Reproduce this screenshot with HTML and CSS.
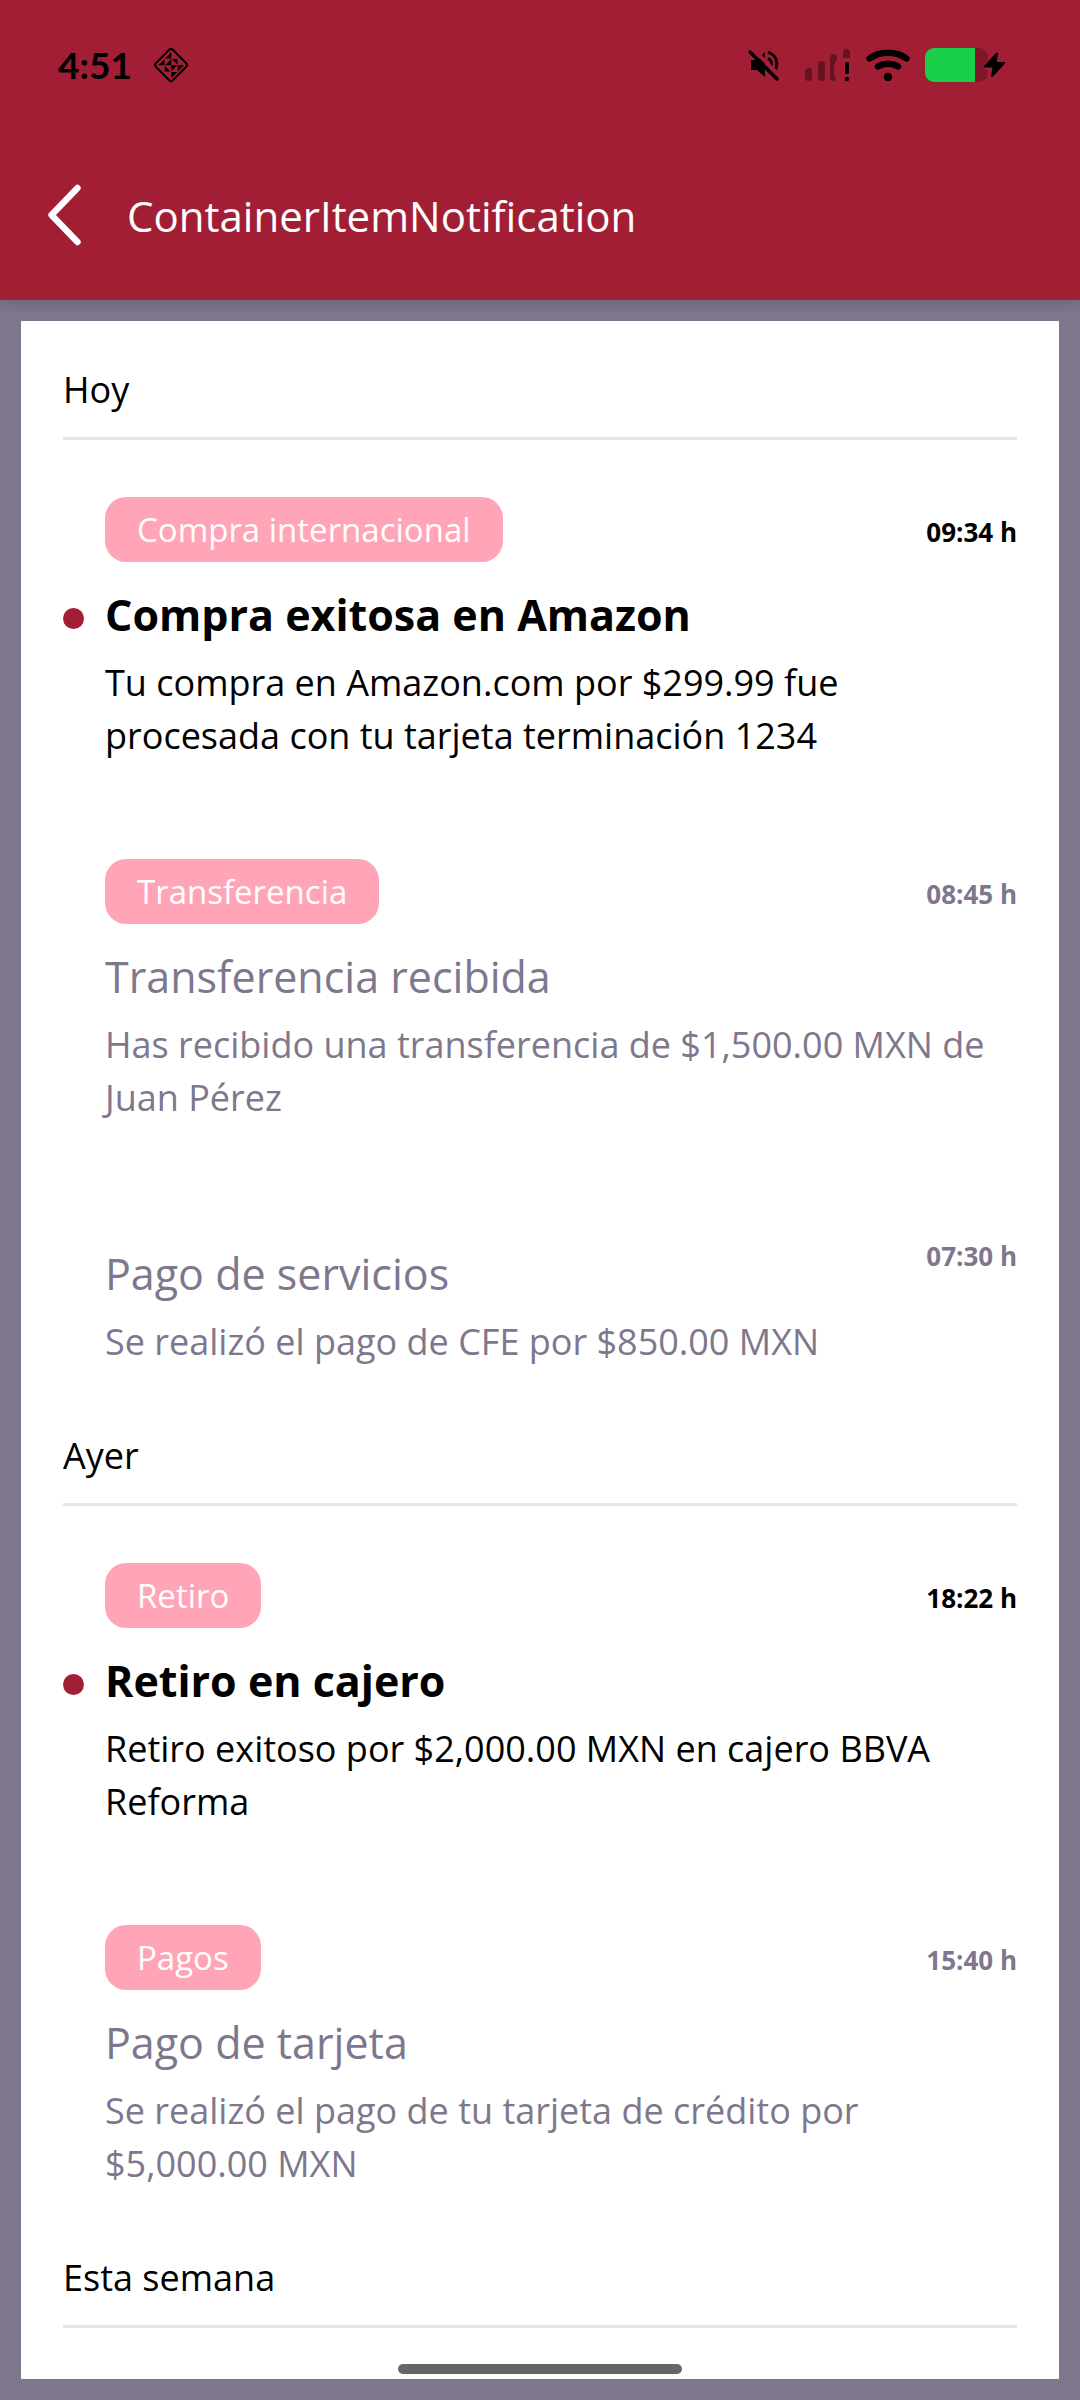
FILE: index.html
```html
<!DOCTYPE html>
<html lang="es">
<head>
<meta charset="utf-8">
<meta name="viewport" content="width=device-width, initial-scale=1">
<title>ContainerItemNotification</title>
<link rel="stylesheet" href="styles.css">
</head>
<body>
<header class="app-header">
  <div class="status-bar">
    <div class="status-left">
      <span class="clock">4:51</span>
      <svg width="38" height="38" viewBox="0 0 38 38" aria-hidden="true">
        <rect x="7" y="7" width="24" height="24" rx="2.5" transform="rotate(45 19 19)" fill="none" stroke="#000" stroke-width="2"/>
        <path d="M19.300 6v6.500h-6zM12.500 13v6.300H6.300zM19.300 13v6.300h-6.300zM20 13h5.500v5.500zM25.800 19.300H32l-6.200 6.200zM19.300 19.300h6l-6 6zM12.800 20v5.500h5.500zM19.300 32v-6h6z" fill="#000"/>
        <path d="M14.500 17.800v-3.300h3.300z" fill="#a21e35"/>
      </svg>
    </div>
    <div class="status-right">
      <svg class="mute" width="32" height="34" viewBox="0 0 32 34" aria-hidden="true">
        <path d="M3 12h6l8-8v25l-8-7H3z"/>
        <path d="M21 4.500c7 3 9 9 7 16M21 11c3 2 3 5 2 8" fill="none" stroke="#000" stroke-width="2.800" stroke-linecap="round"/>
        <path d="M4 0l28 28" stroke="#a21e35" stroke-width="4"/>
        <path d="M2 4l27 27" stroke="#000" stroke-width="3.400" stroke-linecap="round"/>
      </svg>
      <svg width="46" height="34" viewBox="0 0 46 34" aria-hidden="true">
        <g fill="#65131f">
          <rect x="0" y="20" width="7" height="13" rx="3.500"/>
          <rect x="13" y="13" width="7" height="20" rx="3.500"/>
          <path d="M25 9.500a3.500 3.500 0 0 1 7 0v2c-4 6-4 12-1 19.500-1.500 3-6 2.500-6-1.500z"/>
          <path d="M38 10V4.500a3.500 3.500 0 0 1 7 0V10z"/>
        </g>
        <rect x="40" y="14" width="4" height="12" rx="1.500"/>
        <circle cx="42" cy="31" r="2.200"/>
      </svg>
      <svg width="44" height="34" viewBox="0 0 44 34" aria-hidden="true">
        <path d="M3.500 10.500C14 2.800 30 2.800 40.500 10.500M12 18.500c6-3.600 14-3.600 20 0" fill="none" stroke="#000" stroke-width="6.400" stroke-linecap="round"/>
        <circle cx="22" cy="29" r="4.200"/>
      </svg>
      <svg width="82" height="34" viewBox="0 0 82 34" aria-hidden="true">
        <path d="M50 0h3c6 0 10 4 10 10v2l-3 4c-2 4-1 6 3 6v2c0 6-4 10-10 10h-3z" fill="#7f172a"/>
        <path d="M10 0h40v34H10C4 34 0 30 0 24V10C0 4 4 0 10 0z" fill="#1ad04b"/>
        <path d="M71 5L59 18c-.5.800 0 1.500 1 1.500h7.500L66 28.500c.5 1 1.500.5 2 0L80 15.500c.5-.8 0-1.500-1-1.500h-7.500L73 6c0-1.200-1.200-1.800-2-1z"/>
      </svg>
    </div>
  </div>
  <div class="toolbar">
    <button class="back" type="button" aria-label="Volver">
      <svg width="33" height="62" viewBox="0 0 33 62" aria-hidden="true">
        <path d="M29.500 4L3.500 31l26 27" fill="none" stroke="#fff" stroke-width="6.400" stroke-linecap="round" stroke-linejoin="round"/>
      </svg>
    </button>
    <h1 class="toolbar-title">ContainerItemNotification</h1>
  </div>
</header>

<main class="card">
  <section>
    <h2 class="group-title">Hoy</h2>
    <article class="item unread">
      <span class="badge">Compra internacional</span>
      <time class="time">09:34 h</time>
      <span class="dot"></span>
      <h3 class="title">Compra exitosa en Amazon</h3>
      <p class="text">Tu compra en Amazon.com por $299.99 fue procesada con tu tarjeta terminación 1234</p>
    </article>
    <article class="item">
      <span class="badge">Transferencia</span>
      <time class="time">08:45 h</time>
      <h3 class="title">Transferencia recibida</h3>
      <p class="text">Has recibido una transferencia de $1,500.00 MXN de Juan Pérez</p>
    </article>
    <article class="item">
      <time class="time">07:30 h</time>
      <h3 class="title">Pago de servicios</h3>
      <p class="text">Se realizó el pago de CFE por $850.00 MXN</p>
    </article>
  </section>
  <section>
    <h2 class="group-title">Ayer</h2>
    <article class="item unread">
      <span class="badge">Retiro</span>
      <time class="time">18:22 h</time>
      <span class="dot"></span>
      <h3 class="title">Retiro en cajero</h3>
      <p class="text">Retiro exitoso por $2,000.00 MXN en cajero BBVA Reforma</p>
    </article>
    <article class="item">
      <span class="badge">Pagos</span>
      <time class="time">15:40 h</time>
      <h3 class="title">Pago de tarjeta</h3>
      <p class="text">Se realizó el pago de tu tarjeta de crédito por $5,000.00 MXN</p>
    </article>
  </section>
  <section>
    <h2 class="group-title">Esta semana</h2>
  </section>
</main>
<div class="home-indicator"></div>
</body>
</html>
```
FILE: styles.css
```css
* {
  box-sizing: border-box;
}

body {
  margin: 0;
  min-height: 100vh;
  display: flex;
  flex-direction: column;
  background: #7e778d;
  color: #000;
  font-family: "Open Sans", "Noto Sans", sans-serif;
}

h1, h2, h3, p {
  margin: 0;
  font-weight: 400;
}

svg {
  display: block;
  flex: none;
}

.app-header {
  background: #a21e35;
  box-shadow: 0 2px 14px rgba(0, 0, 0, 0.2);
}

.status-bar {
  height: 130px;
  padding: 0 73px 0 58px;
  display: flex;
  align-items: center;
  justify-content: space-between;
}

.status-left,
.status-right {
  display: flex;
  align-items: center;
}

.status-left {
  gap: 20px;
}

.status-right {
  gap: 15px;
}

.mute {
  margin-right: 10px;
}

.clock {
  font: 700 37px/48px Lato, sans-serif;
}

.toolbar {
  height: 170px;
  padding: 0 48px;
  display: flex;
  align-items: center;
  gap: 46px;
}

.back {
  padding: 0;
  border: 0;
  background: none;
}

.toolbar-title {
  color: #fff;
  font-size: 42px;
  line-height: 57px;
}

.card {
  flex: 1;
  margin: 21px;
  padding: 21px 42px 48px;
  background: #fff;
}

.group-title {
  padding: 23px 0;
  border-bottom: 3px solid #e6e5eb;
  font-size: 36px;
  line-height: 49px;
}

.item {
  display: grid;
  grid-template-columns: 21px 1fr auto;
  column-gap: 21px;
  padding: 57px 0 40px;
  color: #7e778d;
}

.unread {
  color: #000;
}

.badge {
  grid-area: 1 / 2;
  justify-self: start;
  padding: 10px 32px;
  border-radius: 21px;
  background: #ffa5b7;
  color: #fff;
  font-size: 33px;
  line-height: 45px;
}

.time {
  grid-area: 1 / 3 / 3 / 4;
  margin-top: 18px;
  font-size: 26px;
  line-height: 35px;
  font-weight: 700;
}

.dot {
  grid-area: 2 / 1;
  width: 21px;
  height: 21px;
  margin-top: 46px;
  border-radius: 50%;
  background: #a21e35;
}

.title {
  grid-area: 2 / 2;
  margin-top: 24px;
  font-size: 43px;
  line-height: 57px;
}

.unread .title {
  font-weight: 700;
}

.text {
  grid-area: 3 / 2 / 4 / 4;
  margin-top: 13px;
  font-size: 36px;
  line-height: 53px;
}

.home-indicator {
  position: fixed;
  bottom: 26px;
  left: 50%;
  width: 284px;
  height: 10px;
  margin-left: -142px;
  border-radius: 5px;
  background: #666;
}
```
